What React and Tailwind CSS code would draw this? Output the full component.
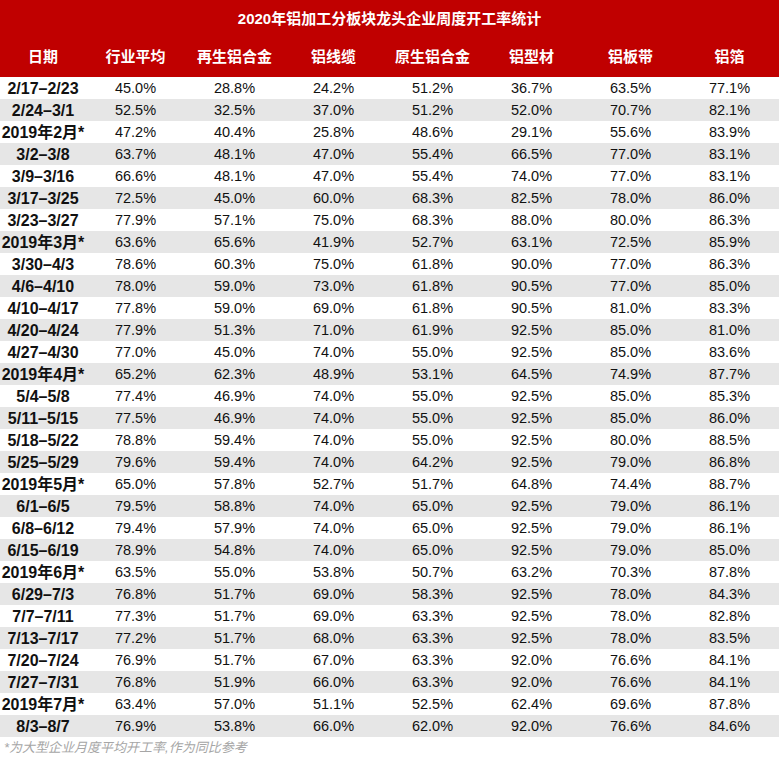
const headers = ["日期", "行业平均", "再生铝合金", "铝线缆", "原生铝合金", "铝型材", "铝板带", "铝箔"];

const rows = [
  ["2/17–2/23", "45.0", "28.8", "24.2", "51.2", "36.7", "63.5", "77.1"],
  ["2/24–3/1", "52.5", "32.5", "37.0", "51.2", "52.0", "70.7", "82.1"],
  ["2019年2月*", "47.2", "40.4", "25.8", "48.6", "29.1", "55.6", "83.9"],
  ["3/2–3/8", "63.7", "48.1", "47.0", "55.4", "66.5", "77.0", "83.1"],
  ["3/9–3/16", "66.6", "48.1", "47.0", "55.4", "74.0", "77.0", "83.1"],
  ["3/17–3/25", "72.5", "45.0", "60.0", "68.3", "82.5", "78.0", "86.0"],
  ["3/23–3/27", "77.9", "57.1", "75.0", "68.3", "88.0", "80.0", "86.3"],
  ["2019年3月*", "63.6", "65.6", "41.9", "52.7", "63.1", "72.5", "85.9"],
  ["3/30–4/3", "78.6", "60.3", "75.0", "61.8", "90.0", "77.0", "86.3"],
  ["4/6–4/10", "78.0", "59.0", "73.0", "61.8", "90.5", "77.0", "85.0"],
  ["4/10–4/17", "77.8", "59.0", "69.0", "61.8", "90.5", "81.0", "83.3"],
  ["4/20–4/24", "77.9", "51.3", "71.0", "61.9", "92.5", "85.0", "81.0"],
  ["4/27–4/30", "77.0", "45.0", "74.0", "55.0", "92.5", "85.0", "83.6"],
  ["2019年4月*", "65.2", "62.3", "48.9", "53.1", "64.5", "74.9", "87.7"],
  ["5/4–5/8", "77.4", "46.9", "74.0", "55.0", "92.5", "85.0", "85.3"],
  ["5/11–5/15", "77.5", "46.9", "74.0", "55.0", "92.5", "85.0", "86.0"],
  ["5/18–5/22", "78.8", "59.4", "74.0", "55.0", "92.5", "80.0", "88.5"],
  ["5/25–5/29", "79.6", "59.4", "74.0", "64.2", "92.5", "79.0", "86.8"],
  ["2019年5月*", "65.0", "57.8", "52.7", "51.7", "64.8", "74.4", "88.7"],
  ["6/1–6/5", "79.5", "58.8", "74.0", "65.0", "92.5", "79.0", "86.1"],
  ["6/8–6/12", "79.4", "57.9", "74.0", "65.0", "92.5", "79.0", "86.1"],
  ["6/15–6/19", "78.9", "54.8", "74.0", "65.0", "92.5", "79.0", "85.0"],
  ["2019年6月*", "63.5", "55.0", "53.8", "50.7", "63.2", "70.3", "87.8"],
  ["6/29–7/3", "76.8", "51.7", "69.0", "58.3", "92.5", "78.0", "84.3"],
  ["7/7–7/11", "77.3", "51.7", "69.0", "63.3", "92.5", "78.0", "82.8"],
  ["7/13–7/17", "77.2", "51.7", "68.0", "63.3", "92.5", "78.0", "83.5"],
  ["7/20–7/24", "76.9", "51.7", "67.0", "63.3", "92.0", "76.6", "84.1"],
  ["7/27–7/31", "76.8", "51.9", "66.0", "63.3", "92.0", "76.6", "84.1"],
  ["2019年7月*", "63.4", "57.0", "51.1", "52.5", "62.4", "69.6", "87.8"],
  ["8/3–8/7", "76.9", "53.8", "66.0", "62.0", "92.0", "76.6", "84.6"],
];

function App() {
    return (
        <div className="w-[779px] h-[761px] bg-white font-['Liberation_Sans','Noto_Sans_CJK_SC',sans-serif]">
            {/* 红色表头 */}
            <div className="bg-[#c00000] text-white font-bold">
                <div className="h-[38px] flex items-center justify-center text-[15px] pt-[1px]">
                    2020年铝加工分板块龙头企业周度开工率统计
                </div>
                <div className="h-[39px] grid grid-cols-[86px_repeat(7,99px)] items-center text-[15px]">
                    {headers.map((h) => (
                        <div key={h} className="text-center">{h}</div>
                    ))}
                </div>
            </div>

            {rows.map((row, i) => (
                <div
                    key={row[0]}
                    className={`h-[22px] grid grid-cols-[86px_repeat(7,99px)] items-center text-[#111] ${i % 2 === 1 ? "bg-[#e6e6e6]" : "bg-white"}`}
                >
                    <div className="text-center font-bold text-[16px] whitespace-nowrap">{row[0]}</div>
                    {row.slice(1).map((v, j) => (
                        <div key={j} className="text-center text-[14.5px]">{v}%</div>
                    ))}
                </div>
            ))}

            <div className="pl-[4px] pt-[1px] text-[13px] italic text-[#a6a6a6]">
                *为大型企业月度平均开工率,作为同比参考
            </div>
        </div>
    );
}

export default App;
